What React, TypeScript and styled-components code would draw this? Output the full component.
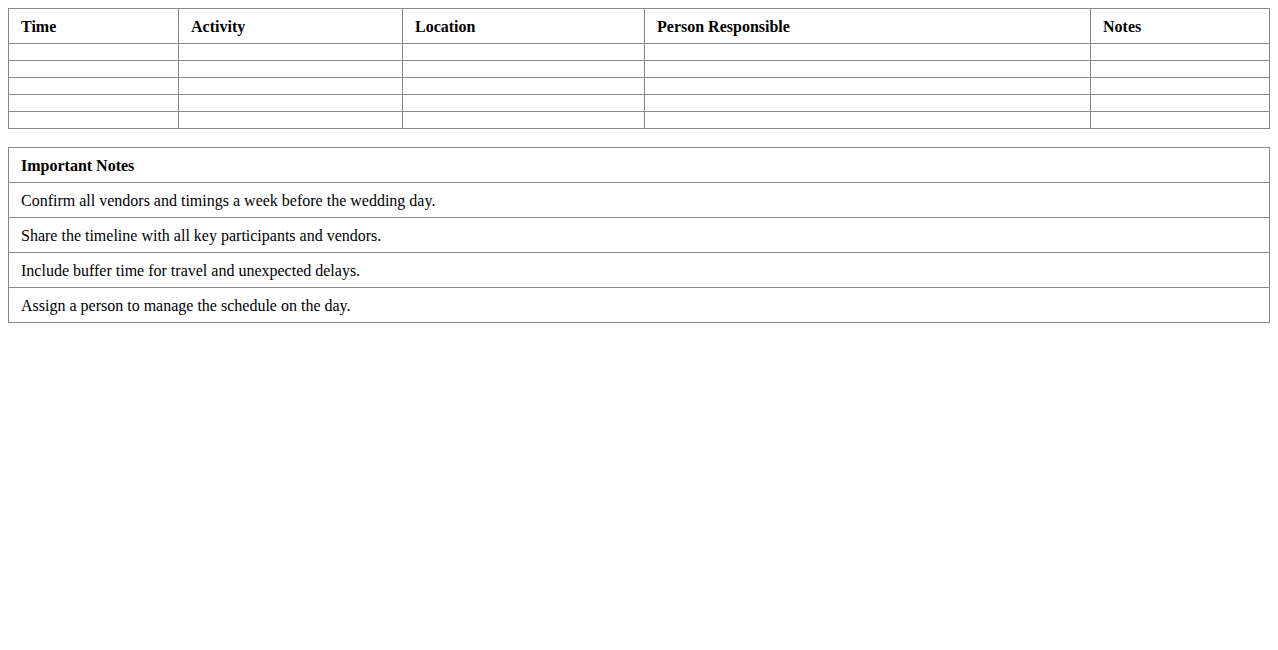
import * as React from 'react';
import styled, { createGlobalStyle } from 'styled-components';

const GlobalStyle = createGlobalStyle`
  body {
    margin: 8px;
    font-family: "Liberation Serif", "Times New Roman", serif;
    font-size: 16px;
    color: #000;
    background: #fff;
  }
`;

const Table = styled.table<{ $spaced?: boolean }>`
  width: 100%;
  border-collapse: collapse;
  table-layout: fixed;
  margin-top: ${(p) => (p.$spaced ? '18px' : '0')};
`;

const HeadCell = styled.th`
  padding: 9px 12px 7px;
  border: 1px solid #888;
  text-align: left;
  font-weight: bold;
  line-height: 18px;
`;

const Cell = styled.td`
  padding: 9px 12px 7px;
  border: 1px solid #888;
  line-height: 18px;
`;

const columns = [
  { title: 'Time', width: 170 },
  { title: 'Activity', width: 224 },
  { title: 'Location', width: 242 },
  { title: 'Person Responsible', width: 446 },
  { title: 'Notes' }
];

const notes = [
  'Confirm all vendors and timings a week before the wedding day.',
  'Share the timeline with all key participants and vendors.',
  'Include buffer time for travel and unexpected delays.',
  'Assign a person to manage the schedule on the day.'
];

const emptyRows = [0, 1, 2, 3, 4];

const App: React.FunctionComponent = () => {
  return (
    <>
      <GlobalStyle />
      <Table>
        <colgroup>
          {columns.map((c) => (
            <col key={c.title} style={c.width ? { width: c.width } : undefined} />
          ))}
        </colgroup>
        <thead>
          <tr>
            {columns.map((c) => (
              <HeadCell key={c.title}>{c.title}</HeadCell>
            ))}
          </tr>
        </thead>
        <tbody>
          {emptyRows.map((r) => (
            <tr key={r}>
              {columns.map((c) => (
                <Cell key={c.title} />
              ))}
            </tr>
          ))}
        </tbody>
      </Table>
      <Table $spaced>
        <thead>
          <tr>
            <HeadCell>Important Notes</HeadCell>
          </tr>
        </thead>
        <tbody>
          {notes.map((n) => (
            <tr key={n}>
              <Cell>{n}</Cell>
            </tr>
          ))}
        </tbody>
      </Table>
    </>
  );
};

export default App;
